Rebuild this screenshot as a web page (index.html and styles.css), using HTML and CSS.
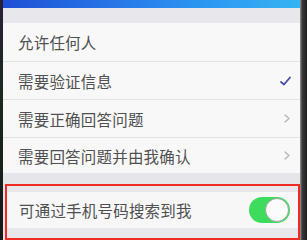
FILE: index.html
```html
<!DOCTYPE html>
<html lang="zh">
<head>
<meta charset="utf-8">
<link rel="stylesheet" href="styles.css">
</head>
<body>
<div class="screen">
  <div class="edge-left"></div>
  <div class="content">
    <div class="topbar"></div>
    <div class="band band-top"></div>
    <div class="list">
      <div class="row r1"><span class="label">允许任何人</span></div>
      <div class="row r2"><span class="label">需要验证信息</span>
        <svg class="check" width="11" height="10" viewBox="0 0 11 10"><path d="M1 6 L4 8.5 L10 1.5" fill="none" stroke="#4a4aa6" stroke-width="1.8" stroke-linecap="round" stroke-linejoin="round"/></svg>
      </div>
      <div class="row r3"><span class="label">需要正确回答问题</span>
        <svg class="chev" width="6" height="9" viewBox="0 0 6 9"><path d="M1 1 L5 4.5 L1 8" fill="none" stroke="#b4b4b8" stroke-width="1.4" stroke-linecap="round" stroke-linejoin="round"/></svg>
      </div>
      <div class="row r4 last"><span class="label">需要回答问题并由我确认</span>
        <svg class="chev" width="6" height="9" viewBox="0 0 6 9"><path d="M1 1 L5 4.5 L1 8" fill="none" stroke="#b4b4b8" stroke-width="1.4" stroke-linecap="round" stroke-linejoin="round"/></svg>
      </div>
    </div>
    <div class="section">
      <div class="highlight">
        <div class="inner-band"></div>
        <div class="row toggle-row"><span class="label">可通过手机号码搜索到我</span>
          <div class="toggle"><div class="knob"></div></div>
        </div>
        <div class="inner-band bottom"></div>
      </div>
    </div>
  </div>
  <div class="edge-right"></div>
</div>
</body>
</html>
```
FILE: styles.css
```css
html, body {
  margin: 0;
  padding: 0;
}
body {
  width: 307px;
  height: 240px;
  overflow: hidden;
  background: #1c1c1e;
  font-family: "Noto Sans CJK SC", "Noto Sans", sans-serif;
}
.screen {
  display: flex;
  height: 240px;
}
.edge-left {
  width: 3px;
  background: linear-gradient(180deg, #2a1f3a, #1a2a1e 40%, #181818);
}
.edge-right {
  width: 7px;
  background: linear-gradient(90deg, #9a9a9a, #3a3a3a 30%, #1e1e1e);
}
.content {
  flex: 1;
  display: flex;
  flex-direction: column;
  background: #ebebef;
}
.topbar {
  height: 9px;
  background: linear-gradient(90deg, #1e4fd6, #2a8ff0 60%, #34b4f4);
}
.band-top {
  height: 16px;
  background: #e8e8ec;
}
.list {
  background: #f7f7f7;
}
.row {
  display: flex;
  align-items: center;
  justify-content: space-between;
  box-sizing: border-box;
  height: 38px;
  padding: 0 9px 0 15px;
  border-bottom: 1px solid #e2e2e4;
  background: #f8f8f8;
}
.row.r1 { height: 39px; }
.row.r4 { height: 35px; }
.row.last { border-bottom: none; }
.label {
  font-size: 15.5px;
  color: #505050;
  letter-spacing: 0.2px;
}
.check { margin-right: 0; }
.chev { margin-right: 1px; }
.section {
  padding-top: 11px;
  background: #e6e6ea;
  flex: 1;
}
.highlight {
  margin-left: 2px;
  border: 2px solid #f02a22;
  border-right-width: 2px;
  height: 52px;
  display: flex;
  flex-direction: column;
  background: #e8e8ec;
}
.inner-band {
  height: 6px;
  background: #e8e8ec;
}
.inner-band.bottom { height: 6px; }
.toggle-row {
  height: 36px;
  border-bottom: none;
  padding: 0 8px 0 12px;
  background: #f7f7f7;
}
.toggle {
  width: 41px;
  height: 26px;
  border-radius: 13px;
  background: #3ddc5c;
  display: flex;
  justify-content: flex-end;
  align-items: center;
  box-sizing: border-box;
  padding: 0 1px;
}
.knob {
  width: 24px;
  height: 24px;
  border-radius: 50%;
  background: #fbfbfb;
  box-sizing: border-box;
  border: 1px solid #9aa59c;
}
```
